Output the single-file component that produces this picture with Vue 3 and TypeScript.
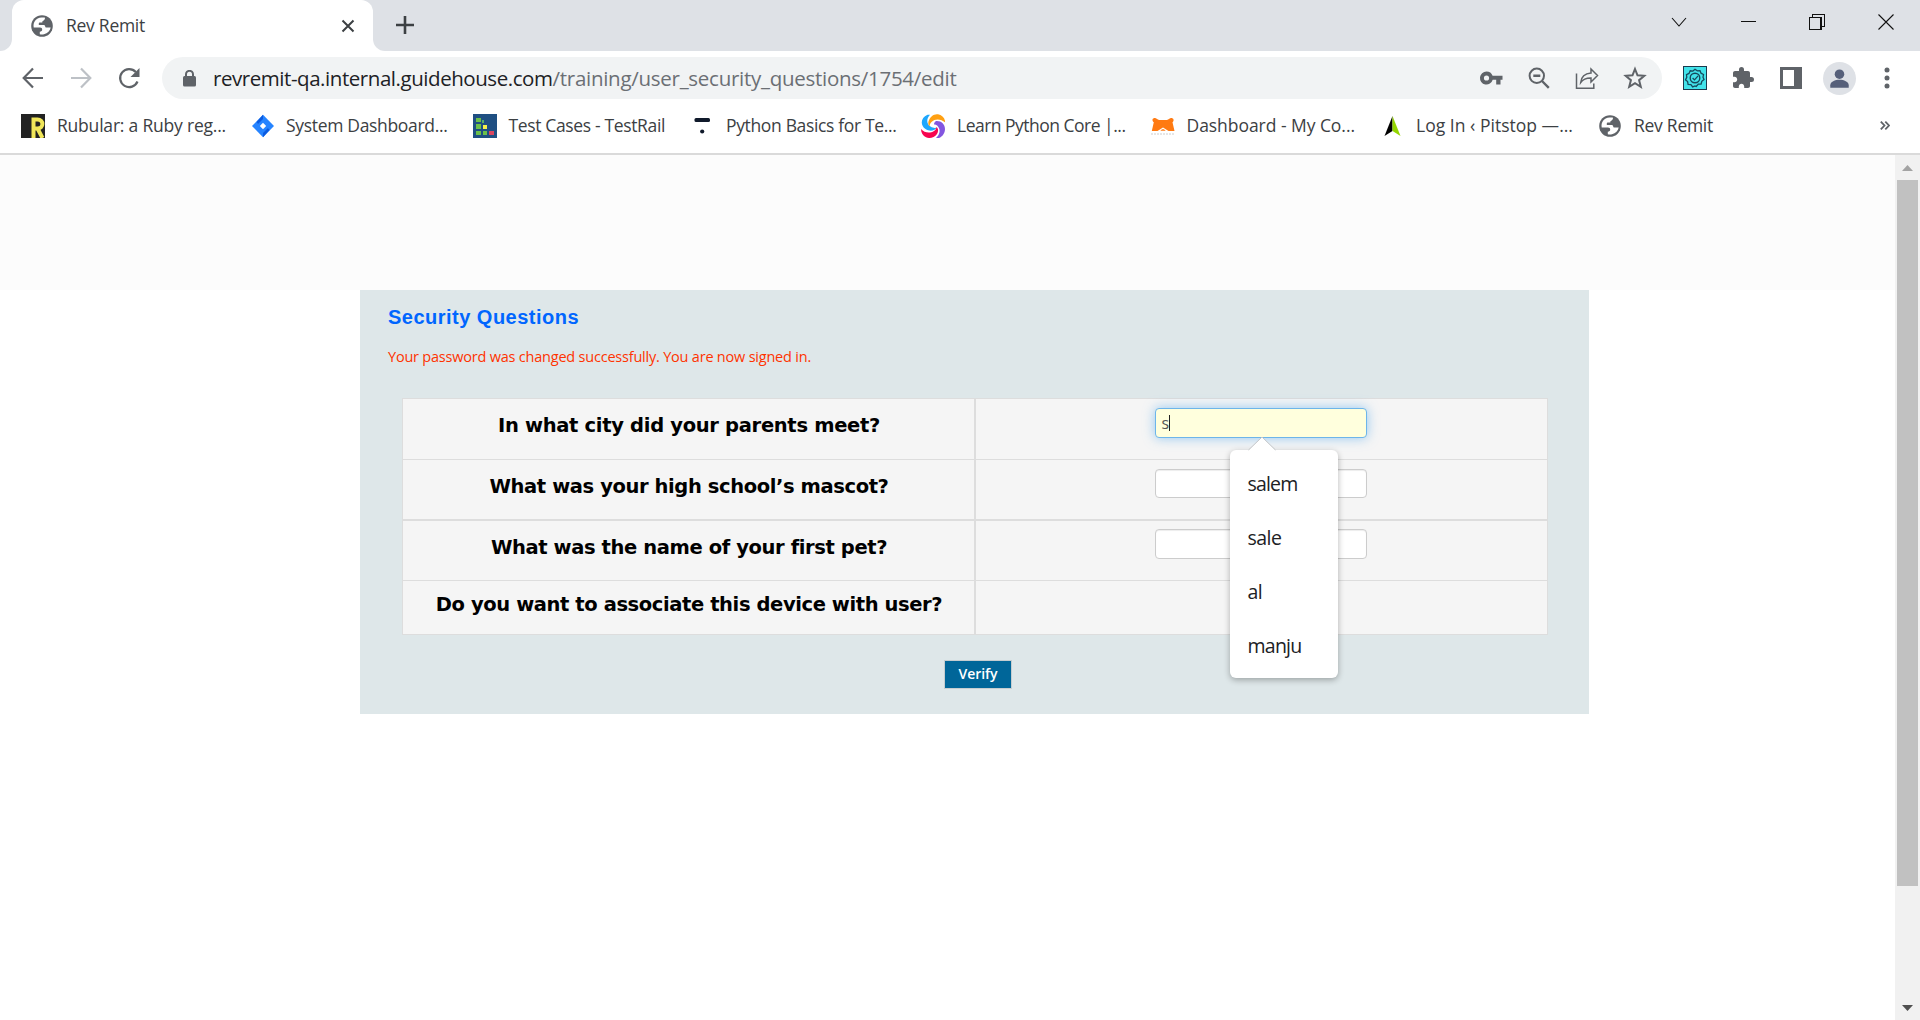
<script setup lang="ts">
import { ref } from 'vue'

interface Bookmark { label: string; icon: string; width: number; text: number }
interface Question { text: string; width: number; row: string }

const bookmarks: Bookmark[] = [
  { label: 'Rubular: a Ruby reg...', icon: 'rubular', width: 229, text: 169 },
  { label: 'System Dashboard...', icon: 'jira', width: 222.5, text: 161.5 },
  { label: 'Test Cases - TestRail', icon: 'testrail', width: 217.5, text: 156.5 },
  { label: 'Python Basics for Te...', icon: 'tau', width: 231, text: 170.5 },
  { label: 'Learn Python Core |...', icon: 'sololearn', width: 229.5, text: 168.5 },
  { label: 'Dashboard - My Co...', icon: 'dash', width: 229.5, text: 168.5 },
  { label: 'Log In ‹ Pitstop —...', icon: 'pitstop', width: 218, text: 157 },
  { label: 'Rev Remit', icon: 'globe', width: 120, text: 79 },
]

const questions: Question[] = [
  { text: 'In what city did your parents meet?', width: 382, row: 'city' },
  { text: 'What was your high school’s mascot?', width: 399, row: 'mascot' },
  { text: 'What was the name of your first pet?', width: 395.5, row: 'pet' },
  { text: 'Do you want to associate this device with user?', width: 506.5, row: 'device' },
]

const suggestions = [
  { text: 'salem', width: 50 },
  { text: 'sale', width: 34 },
  { text: 'al', width: 14.5 },
  { text: 'manju', width: 54 },
]

const answer = ref('s')

// Spreads a label's letters so that it fills the given width in pixels.
const vFit = {
  mounted(el: HTMLElement, binding: { value: number }) {
    const count = (el.textContent ?? '').length
    const natural = el.getBoundingClientRect().width
    if (count) el.style.letterSpacing = `${(binding.value - natural) / count}px`
  },
}
</script>

<template>
  <div class="window">
    <svg class="defs" width="0" height="0">
      <symbol id="globe" viewBox="0 0 24 24">
        <circle cx="12" cy="12" r="10.8" fill="#5f6368" />
        <path fill="#fff" d="M11.6 3.6h3.2c.5 1.3-.2 2.5-1.500 3.100-.900.4-1.100 1-1 1.800h-2.600c-.6 0-.9.4-.9 1v1.500h4.600c1 0 1.500.5 1.800 1.400.2.8.7 1.200 1.600 1.200h3.900c-.6 3-3 5.800-6.700 6.700-1.800.3-3.200.2-4.200-.1v-2.500c1.600 0 2.400-.8 2.400-2.200 0-1.300-.7-2.100-2.200-2.100H3.700c-.9-4.600 2-9.500 7.900-9.800z" />
      </symbol>
    </svg>

    <header class="tabstrip">
      <div class="strip-edge"></div>
      <div class="tab">
        <svg class="i24" viewBox="0 0 24 24"><use href="#globe" /></svg>
        <span class="tab-title"><span v-fit="79">Rev Remit</span></span>
        <svg class="tab-close" viewBox="0 0 14 14"><path d="M1.500 1.500l11 11M12.500 1.500l-11 11" /></svg>
      </div>
      <div class="strip-rest">
        <svg class="plus" viewBox="0 0 18 18"><path d="M9 0v18M0 9h18" /></svg>
        <div class="win-buttons">
          <svg viewBox="0 0 16 16"><path d="M1 4l7 8 7-8" /></svg>
          <svg viewBox="0 0 16 16"><path shape-rendering="crispEdges" d="M.5 7.500h15" /></svg>
          <svg viewBox="0 0 16 16"><path shape-rendering="crispEdges" d="M.5 3.500h11.500v12H.5zM3.500 3V.5h12v12H12.500" /></svg>
          <svg viewBox="0 0 16 16"><path d="M.5.5l15 15M15.500.5l-15 15" /></svg>
        </div>
      </div>
    </header>

    <div class="toolbar">
      <svg class="nav back" viewBox="0 0 24 24"><path d="M22 12H3.500M12 2.500L2.700 12l9.300 9.500" /></svg>
      <svg class="nav forward" viewBox="0 0 24 24"><path d="M2 12h18.500M12 2.500l9.300 9.500-9.300 9.500" /></svg>
      <svg class="nav reload" viewBox="0 0 24 24"><path d="M20.500 15.500A9 9 0 1 1 18.800 6" /><path class="solid" d="M22.500 2v9h-9z" /></svg>
      <div class="omnibox">
        <svg class="lock" viewBox="0 0 13 17"><rect y="6" width="13" height="10.500" rx="1.500" /><path d="M3 7V4.300a3.500 3.500 0 0 1 7 0V7" /></svg>
        <div class="url"><span v-fit="339.5" class="host">revremit-qa.internal.guidehouse.com</span><span v-fit="404">/training/user_security_questions/1754/edit</span></div>
        <svg class="oi" viewBox="0 0 24 24"><path class="solid" fill-rule="evenodd" d="M7.500 5.500a6.500 6.500 0 0 1 6.100 4.300H23.500v4h-2V18.500h-4.300v-4.700h-3.500A6.500 6.500 0 1 1 7.500 5.500zm0 3.900a2.600 2.600 0 1 0 0 5.200 2.600 2.600 0 0 0 0-5.200z" /></svg>
        <svg class="oi" viewBox="0 0 24 24"><circle cx="9.800" cy="9.800" r="7.200" /><path d="M6.300 9.800h7M15 15l6.800 6.800" stroke-width="2.400" /></svg>
        <svg class="oi share" viewBox="0 0 24 24"><path d="M1.500 7.500v14.800h17.300v-4.800M5.700 16.500c.5-5 3.500-9 10.300-9.500V3l6.500 6.500L16 16v-4c-5-.1-8 1.300-10.300 4.500z" /></svg>
        <svg class="oi star" viewBox="0 0 24 24"><path d="M12 3l2.500 6.300 6.800.500-5.200 4.400 1.700 6.600-5.800-3.600-5.800 3.600 1.700-6.600L2.700 9.800l6.800-.5z" /></svg>
      </div>
      <svg class="ext" viewBox="0 0 24 24">
        <rect x=".5" y=".5" width="23" height="23" fill="#42e3ea" stroke="#1b3a4d" />
        <path fill="none" stroke="#164a5c" stroke-width="1.300" d="M12 3.300l2.300 1.500 2.700-.200 1 2.600 2.500 1.300-.5 2.700 1 2.400-2.200 1.700-.7 2.700-2.800.1L13.200 20.500 12 20l-2.300.9-1.800-2.300-2.800-.3-.5-2.700-2.100-1.800 1.300-2.500-.3-2.700 2.500-1.200 1.200-2.600 2.700.3z" />
        <circle cx="12" cy="12" r="4.800" fill="none" stroke="#164a5c" stroke-width="1.400" />
        <path fill="none" stroke="#164a5c" stroke-width="1.300" d="M9.600 12l1.900 1.900 3.600-4" />
      </svg>
      <svg class="puzzle" viewBox="0 0 24 24"><path d="M20.500 11H19V7c0-1.100-.9-2-2-2h-4V3.500a2.500 2.500 0 0 0-5 0V5H4c-1.100 0-2 .9-2 2v3.800h1.500c1.500 0 2.700 1.200 2.700 2.700S5 16.200 3.500 16.200H2V20c0 1.100.9 2 2 2h3.800v-1.500c0-1.500 1.200-2.700 2.700-2.700s2.700 1.200 2.700 2.700V22H17c1.100 0 2-.9 2-2v-4h1.500a2.500 2.500 0 0 0 0-5z" /></svg>
      <svg class="panel-icon" viewBox="0 0 22 22"><path fill-rule="evenodd" d="M0 0h22v22H0zM3 3v16h11V3z" /></svg>
      <svg class="avatar" viewBox="0 0 34 34"><circle cx="17" cy="17" r="17" fill="#dee1e6" /><circle cx="17" cy="12.500" r="4.900" /><path d="M7.500 26.500V24c0-3.800 5-5.700 9.500-5.700s9.500 1.900 9.500 5.700v2.500z" /></svg>
      <svg class="menu" viewBox="0 0 6 22"><circle cx="3" cy="3" r="2.500" /><circle cx="3" cy="11" r="2.500" /><circle cx="3" cy="19" r="2.500" /></svg>
    </div>

    <nav class="bookmarks">
      <div v-for="b in bookmarks" :key="b.label" class="bookmark" :style="{ width: b.width + 'px' }">
        <svg v-if="b.icon === 'rubular'" class="i24" viewBox="0 0 24 24"><rect width="24" height="24" fill="#222" /><path fill="none" stroke="#f0e65a" stroke-width="4" d="M12.500 24V5.500h4c6.500 0 6.500 9 0 9h-2.500M16.500 14.500l5 9.500" /></svg>
        <svg v-else-if="b.icon === 'jira'" class="i24" viewBox="0 0 24 24"><path fill="#2684ff" d="M13 .8L24 12 13 23.200 2 12z" /><path fill="#0b5be0" d="M13 .8v8l-3.500 3-3-3.800zM13 23.200v-8l3.500-3 3 3.800z" /><path fill="#2684ff" d="M13 5l7 7-7 7-7-7z" /><path fill="#fff" d="M13 8.800l3.200 3.200-3.200 3.200L9.800 12z" /></svg>
        <svg v-else-if="b.icon === 'testrail'" class="i24" viewBox="0 0 24 24" shape-rendering="crispEdges"><rect width="24" height="24" fill="#1f4f82" /><path fill="#6cc04a" d="M3 4h4.500v4H3zM3 10h4.500v5H3zM3 17h4.500v4H3z" /><path fill="#55b06b" d="M8.500 6h2v3h-2z" /><path fill="#f7f04a" d="M9.500 11H14v4H9.500z" /><path fill="#6cc04a" d="M9.500 17H14v4H9.500z" /><path fill="#d9455f" d="M16 17h4.500v4H16z" /></svg>
        <svg v-else-if="b.icon === 'tau'" class="i24" viewBox="0 0 24 24"><rect x="4.500" y="4" width="15.500" height="4" rx="1.500" fill="#101a2b" /><circle cx="12.200" cy="17.500" r="2.100" fill="#101a2b" /></svg>
        <svg v-else-if="b.icon === 'sololearn'" class="i24" viewBox="0 0 24 24">
          <path fill="#1ea7fd" d="M6.500.8h2.500C5.500 4.500 5 9.500 9.500 12.500c2.500 1.700 5 1.700 6.500 1-2 3.500-7.500 4.300-11.500 1.500C-1 11-.5 4 6.500.8z" />
          <path fill="#ffa012" d="M7.500 7.500C9 2.500 13-.3 17 .3c3.500.5 6.200 3 7 6.500v1.500c-4-3.500-10-4-13.500-.300-1.500 1.500-2 3-1.800 4.500C7.500 11.500 7 9.500 7.500 7.500z" />
          <path fill="#8356e0" d="M15 7c5-.5 9 3 9 8 0 4-2.500 7.700-6 9h-3c3.500-3 5-8 2-11.500-1-1.500-2.500-2-4-2 0-1.500.8-2.800 2-3.500z" />
          <path fill="#f7044f" d="M0 15c3.500 4 9 4.500 13 2 1.500-1 2.500-2.500 2.500-4 2 1.500 2 4.500.5 7-2.500 3.500-7.500 5-11 3.300C2 21.800 0 19 0 15z" />
        </svg>
        <svg v-else-if="b.icon === 'dash'" class="i24" viewBox="0 0 24 24"><path fill="#ff7a12" d="M1.500 5.500C2 4 4.500 3.500 6 5l2 1h8l2-1c1.500-1.500 4-1 4.500.5.3 1-.2 2.200-1 2.800l2 8.700H17.500L12 13.500 6.500 17H.8l2-8.700c-1-.8-1.500-1.800-1.300-2.800z" /><path fill="#ff7a12" d="M9.500 16.800c1-2 4-2 5 0z" /><path stroke="#e6e6e6" stroke-width="2" stroke-dasharray="2 1" d="M0 20h24" /></svg>
        <svg v-else-if="b.icon === 'pitstop'" class="i24" viewBox="0 0 24 24"><path fill="#000" d="M12.500 2L4.500 22l8-5z" /><path fill="#93d500" d="M12.500 2l8 20-8-5z" /></svg>
        <svg v-else class="i24" viewBox="0 0 24 24"><use href="#globe" /></svg>
        <span v-fit="b.text" class="label">{{ b.label }}</span>
      </div>
      <svg class="more" viewBox="0 0 10 9"><path d="M.8.6l3.700 3.900L.8 8.400M5.300.6L9 4.500 5.300 8.400" /></svg>
    </nav>

    <div class="viewport">
      <main class="page">
        <div class="banner"></div>
        <section class="card">
          <h1><span v-fit="191">Security Questions</span></h1>
          <p class="flash"><span v-fit="423">Your password was changed successfully. You are now signed in.</span></p>
          <div class="table">
            <div v-for="(q, i) in questions" :key="q.row" class="row" :class="q.row">
              <div class="cell question"><span v-fit="q.width">{{ q.text }}</span></div>
              <div class="cell">
                <div v-if="i === 0" class="field focused">
                  <span>{{ answer }}</span><i class="caret"></i>
                  <div class="popup">
                    <svg class="pointer" viewBox="0 0 28 14"><path fill="#fff" d="M0 14L14 0l14 14z" /><path fill="none" stroke="#c3c5c8" d="M.5 13L14 0l13.500 13" /></svg>
                    <div v-for="s in suggestions" :key="s.text" class="option"><span v-fit="s.width">{{ s.text }}</span></div>
                  </div>
                </div>
                <div v-else-if="i < 3" class="field"></div>
              </div>
            </div>
          </div>
          <button class="verify"><span v-fit="39">Verify</span></button>
        </section>
      </main>
      <aside class="scrollbar">
        <svg class="arrow up" viewBox="0 0 11 6"><path d="M0 6l5.500-6L11 6z" /></svg>
        <div class="thumb"></div>
        <svg class="arrow down" viewBox="0 0 11 6"><path d="M0 0h11L5.500 6z" /></svg>
      </aside>
    </div>
  </div>
</template>

<style>
body { overflow: hidden; }
</style>

<style scoped>
.window { width: 1920px; height: 1020px; display: flex; flex-direction: column; background: #fff; font-family: "Open Sans", "Noto Sans", sans-serif; color: #3c4043; overflow: hidden; box-sizing: border-box; }
.window *, .window *::before { box-sizing: border-box; }
.defs { display: none; }
svg { display: block; flex: none; }
span { display: inline-block; white-space: nowrap; }
.i24 { width: 24px; height: 24px; }

.tabstrip { display: flex; height: 51px; background: #fff; flex: none; }
.strip-edge { width: 12px; background: #dee1e6; border-bottom-right-radius: 12px; }
.tab { width: 361px; display: flex; align-items: center; padding: 0 18px; background: linear-gradient(#dee1e6, #dee1e6) top / 100% 13px no-repeat; position: relative; isolation: isolate; }
.tab::before { content: ""; position: absolute; inset: 0; z-index: -1; background: #fff; border-radius: 12px 12px 0 0; }
.tab-title { flex: 1; margin: 0 0 2px 12px; font-size: 17.5px; line-height: 24px; }
.tab-close { width: 14px; height: 14px; stroke: #3c4043; stroke-width: 2; fill: none; }
.strip-rest { flex: 1; display: flex; justify-content: space-between; background: #dee1e6; border-bottom-left-radius: 12px; padding: 14px 26px 0 23px; }
.plus { width: 18px; height: 18px; margin-top: 2px; stroke: #3c4043; stroke-width: 2.600; fill: none; }
.win-buttons { display: flex; gap: 53px; }
.win-buttons svg { width: 16px; height: 16px; fill: none; stroke: #111; stroke-width: 1.100; }

.toolbar { display: flex; align-items: center; height: 42px; margin-top: 6px; flex: none; }
.nav { width: 24px; height: 24px; fill: none; stroke: #5f6368; stroke-width: 2.200; }
.back { margin-left: 21px; }
.forward { margin-left: 24px; stroke: #bdc1c6; }
.reload { margin-left: 24px; }
.reload .solid { fill: #5f6368; stroke: none; }
.omnibox { width: 1500px; height: 42px; margin-left: 21px; display: flex; align-items: center; background: #f1f3f4; border-radius: 21px; padding: 0 15px 0 21px; }
.lock { width: 13px; height: 17px; }
.lock rect { fill: #5f6368; }
.lock path { fill: none; stroke: #5f6368; stroke-width: 2; }
.url { flex: 1; margin-left: 17px; font-size: 20.500px; line-height: 28px; color: #6b6f74; white-space: nowrap; }
.host { color: #202124; }
.oi { width: 24px; height: 24px; margin-left: 24px; fill: none; stroke: #5f6368; stroke-width: 2; }
.oi .solid { fill: #5f6368; stroke: none; }
.share { stroke-width: 1.500; }
.ext { width: 24px; height: 24px; margin-left: 21px; }
.puzzle { width: 24px; height: 24px; margin-left: 24px; fill: #5f6368; }
.panel-icon { width: 22px; height: 22px; margin-left: 25px; fill: #5f6368; }
.avatar { width: 33px; height: 33px; margin-left: 21px; fill: #56607a; }
.menu { width: 6px; height: 22px; margin-left: 28px; fill: #5f6368; }

.bookmarks { display: flex; align-items: center; height: 56px; padding-left: 21px; border-bottom: 2px solid #dadada; flex: none; }
.bookmark { display: flex; align-items: center; gap: 12px; flex: none; }
.label { font-size: 17.500px; line-height: 24px; margin-bottom: 2px; }
.more { width: 10px; height: 9px; margin-left: auto; margin-right: 30px; margin-bottom: 1px; fill: none; stroke: #5f6368; stroke-width: 1.800; }

.viewport { flex: 1; display: flex; min-height: 0; }
.page { flex: 1; }
.banner { height: 135px; background: #fcfcfc; }
.card { width: 1229px; height: 424px; margin-left: 360px; background: #dee7e9; padding: 15px 41px 0 42px; display: flex; flex-direction: column; }
h1 { margin: 0 0 0 -14px; font: bold 20px/24px "Liberation Sans", Arial, sans-serif; color: #0066ff; }
.flash { margin: 18px 0 0 -14px; font-size: 14.500px; line-height: 20px; color: #ff3300; }
.table { margin-top: 31px; border: 1px solid #ddd; background: #f5f5f5; height: 237px; }
.row { display: flex; height: 61px; border-bottom: 1px solid #ddd; }
.mascot { border-bottom-width: 2px; }
.pet { height: 60px; }
.device { height: 53px; border-bottom: 0; }
.cell { flex: 1; display: flex; justify-content: center; align-items: flex-start; padding: 9px 2px 0 0; }
.pet .cell { padding-top: 8px; }
.row .question { flex: 0 0 573px; border-right: 2px solid #ddd; padding: 15px 0 0 1px; font: bold 19.500px/24px "DejaVu Sans", "Noto Sans", sans-serif; color: #000; }
.device .question { padding-top: 12px; }
.field { width: 212px; height: 30px; border: 1px solid #ccc; border-radius: 4px; background: #fff; box-shadow: inset 0 1px 1px rgba(0, 0, 0, .075); display: flex; align-items: center; padding-left: 6px; position: relative; font-size: 16px; color: #555; }
.mascot .field { height: 29px; }
.focused { border-color: #6db5ea; background: #ffffdd; box-shadow: 0 0 12px rgba(82, 168, 236, .6); }
.caret { width: 1px; height: 16px; background: #222; }
.popup { position: absolute; left: 74px; top: 41px; width: 108px; height: 228px; padding-top: 7px; background: #fff; border-radius: 6px; box-shadow: 0 2px 6px rgba(0, 0, 0, .3); z-index: 2; }
.pointer { position: absolute; left: 18px; top: -13px; width: 28px; height: 14px; }
.option { height: 54px; line-height: 54px; padding-left: 18px; font-size: 19.500px; color: #202124; }
.verify { align-self: flex-start; width: 68px; height: 29px; margin: 25px 0 0 542px; padding: 0 0 2px; border: 1px solid #c5cdd0; background: #006699; color: #fff; font: 600 14px/24px "Open Sans", sans-serif; }

.scrollbar { width: 25px; background: #f1f1f1; display: flex; flex-direction: column; align-items: center; padding: 10px 0 9px; }
.arrow { width: 11px; height: 6px; fill: #a3a3a3; }
.down { margin-top: auto; fill: #505050; }
.thumb { width: 21px; height: 706px; margin-top: 9px; background: #c1c1c1; }
</style>
